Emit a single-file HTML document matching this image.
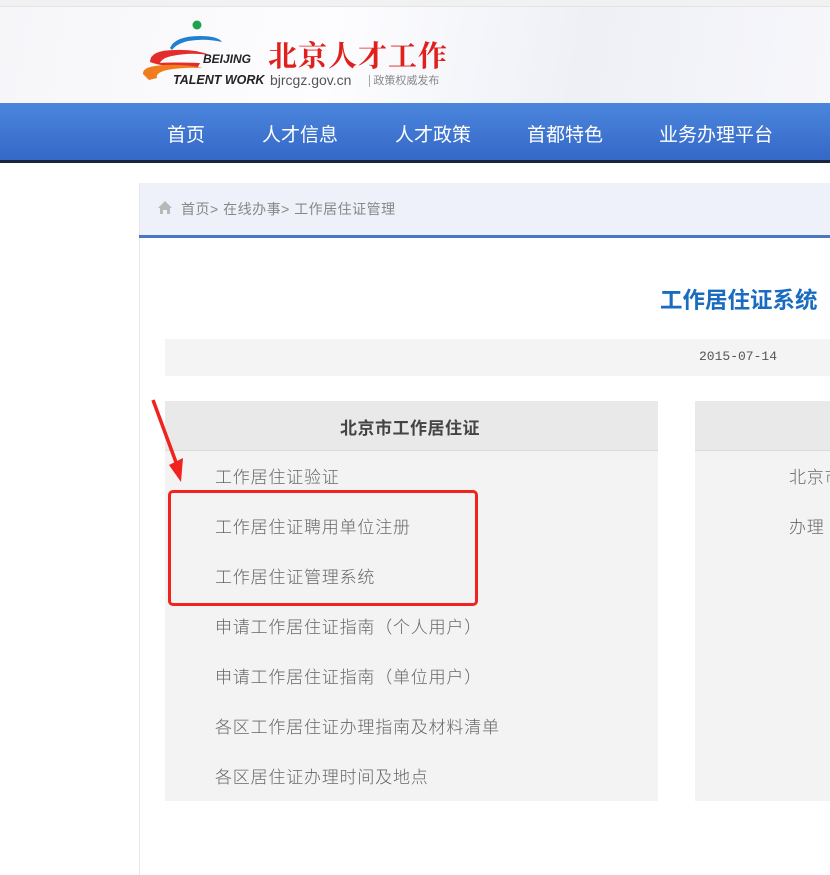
<!DOCTYPE html>
<html><head><meta charset="utf-8"><style>
*{margin:0;padding:0;box-sizing:border-box}
body{width:830px;height:875px;overflow:hidden;background:#fff;font-family:"Liberation Sans","Noto Sans CJK SC",sans-serif;position:relative}
.a{position:absolute}
.nav span{position:absolute;top:120px;color:#fff;font-size:19px}
.item{position:absolute;left:215px;font-size:17px;letter-spacing:0.8px;color:#666;white-space:nowrap;font-weight:300}
</style></head><body>
<div class="a" style="left:0;top:0;width:830px;height:7px;background:#f1f1f1;border-bottom:1px solid #e4e4e4"></div>
<div class="a" style="left:0;top:7px;width:830px;height:96px;background:linear-gradient(100deg,#f6f6f9 0%,#fdfdff 40%,#eef0f6 70%,#f7f7fb 100%)"></div>
<svg class="a" style="left:0;top:0" width="470" height="100">
<circle cx="197" cy="25" r="4.5" fill="#1ea34a"/>
<path d="M170 48 Q175 36 200 36 Q218 36 222 42 Q205 38 188 41 Q176 44 172 50Z" fill="#1f7fd0"/>
<path d="M150 62 Q150 50 175 50 Q195 49 210 55 Q190 52 172 56 Q162 58 160 63 Q170 62 200 63 L198 67 Q165 68 150 62Z" fill="#e42d2a"/>
<path d="M143 74 Q142 66 165 65 Q185 64 203 68 Q182 67 167 70 Q155 73 157 78 L149 80Z" fill="#f07c1d"/>
<text x="203" y="63" font-size="12" font-weight="bold" font-style="italic" fill="#222" font-family="Liberation Sans">BEIJING</text>
<text x="173" y="84" font-size="12.5" font-weight="bold" font-style="italic" fill="#222" font-family="Liberation Sans">TALENT WORK</text>
<text x="268" y="66" font-size="29" font-weight="bold" fill="#e0201c" font-family="Noto Serif CJK SC,serif" letter-spacing="1">北京人才工作</text>
<text x="270" y="85" font-size="14" fill="#555" font-family="Liberation Sans">bjrcgz.gov.cn</text>
<text x="368" y="84" font-size="11" fill="#888" font-family="Noto Sans CJK SC,sans-serif">| 政策权威发布</text>
</svg>
<div class="a" style="left:0;top:103px;width:830px;height:57px;background:linear-gradient(#4b86dc,#3568c8)"></div>
<div class="a" style="left:0;top:160px;width:830px;height:3px;background:#1a2440"></div>
<div class="nav"><span style="left:167px">首页</span><span style="left:262px">人才信息</span><span style="left:395px">人才政策</span><span style="left:527px">首都特色</span><span style="left:659px">业务办理平台</span></div>
<div class="a" style="left:139px;top:183px;width:1px;height:692px;background:#e6e6e6"></div>
<div class="a" style="left:140px;top:183px;width:690px;height:52px;background:#eef0fa"></div>
<div class="a" style="left:139px;top:235px;width:691px;height:3px;background:#4a76c4"></div>
<svg class="a" style="left:157px;top:200px" width="16" height="15"><path d="M8 1 L1 8 H3 V14 H6 V10 H10 V14 H13 V8 H15Z" fill="#b8b8b8"/></svg>
<div class="a" style="left:181px;top:199px;font-size:14px;color:#888;letter-spacing:0.5px">首页&gt; 在线办事&gt; 工作居住证管理</div>
<div class="a" style="left:660px;top:283px;font-size:22.5px;font-weight:bold;color:#1a6cc0">工作居住证系统</div>
<div class="a" style="left:165px;top:339px;width:665px;height:37px;background:#f4f4f4"></div>
<div class="a" style="left:699px;top:349px;font-size:13px;color:#555;font-family:'Liberation Mono',monospace">2015-07-14</div>
<div class="a" style="left:165px;top:401px;width:493px;height:400px;background:#f3f3f3"></div>
<div class="a" style="left:165px;top:401px;width:493px;height:50px;background:#e9e9e9;border-bottom:1px solid #dcdcdc"></div>
<div class="a" style="left:340px;top:414px;font-size:17px;font-weight:bold;color:#444;letter-spacing:0.5px">北京市工作居住证</div>
<div class="a" style="left:695px;top:401px;width:135px;height:400px;background:#f3f3f3"></div>
<div class="a" style="left:695px;top:401px;width:135px;height:50px;background:#e9e9e9;border-bottom:1px solid #dcdcdc"></div>
<div class="item" style="top:463px">工作居住证验证</div>
<div class="item" style="top:513px">工作居住证聘用单位注册</div>
<div class="item" style="top:563px">工作居住证管理系统</div>
<div class="item" style="top:613px">申请工作居住证指南（个人用户）</div>
<div class="item" style="top:663px">申请工作居住证指南（单位用户）</div>
<div class="item" style="top:713px">各区工作居住证办理指南及材料清单</div>
<div class="item" style="top:763px">各区居住证办理时间及地点</div>
<div class="item" style="left:789px;top:463px">北京市</div>
<div class="item" style="left:789px;top:513px">办理</div>
<div class="a" style="left:168px;top:490px;width:310px;height:116px;border:3px solid #f0231e;border-radius:5px"></div>
<svg class="a" style="left:145px;top:395px" width="45" height="95"><path d="M8 5 L32 70" stroke="#f0231e" stroke-width="3.5"/><path d="M24 70 L38 63 L36 87Z" fill="#f0231e"/></svg>
</body></html>
